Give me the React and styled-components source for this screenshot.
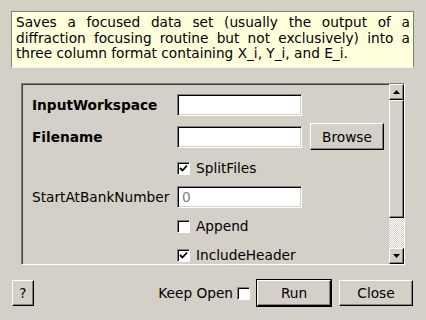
import React from 'react';
import styled, { createGlobalStyle, css } from 'styled-components';

const GlobalStyle = createGlobalStyle`
html, body {
  margin: 0;
  padding: 0;
  background: #d4d0c8;
}
body {
  font-family: "DejaVu Sans", "Liberation Sans", sans-serif;
  font-size: 13.7px;
  color: #000;
}
`;

const Window = styled.div`
width: 426px;
height: 320px;
box-sizing: border-box;
padding: 11px 12px 12px 11px;
display: flex;
flex-direction: column;
background: #d4d0c8;
`;

const Description = styled.div`
height: 57px;
box-sizing: border-box;
background: #ffffdc;
border: 1px solid #808080;
border-bottom-color: #f4f4f4;
padding: 3px 3px 0 4px;
line-height: 15.5px;
text-align: justify;
`;

const Panel = styled.div`
margin: 15px 9px 0 10px;
height: 182px;
box-sizing: border-box;
display: flex;
border: 1px solid;
border-color: #808080 #fff #fff #808080;
box-shadow: inset 1px 1px #404040;
overflow: hidden;
`;

const Form = styled.div`
flex: 1;
padding: 10px 0 0 10px;
display: grid;
grid-template-columns: 137px 125px 74px;
grid-template-rows: 22px 27px 22px 22px 22px 22px;
column-gap: 8px;
row-gap: 7px;
align-items: center;
`;

const Label = styled.div`
grid-column: 1;
white-space: nowrap;
font-weight: ${p => (p.$bold ? 'bold' : 'normal')};
`;

const Field = styled.div`
grid-column: 2;
height: 22px;
box-sizing: border-box;
background: #fff;
border: 1px solid;
border-color: #808080 #fff #fff #808080;
box-shadow: inset 1px 1px #000, inset -1px -1px #d4d0c8;
padding: 2px 4px;
color: #808080;
line-height: 16px;
`;

const raised = css`
box-sizing: border-box;
background: #d4d0c8;
border: 1px solid;
border-color: #fff #000 #000 #fff;
box-shadow: inset -1px -1px #808080;
`;

const Button = styled.div`
${raised}
height: ${p => p.$h || 26}px;
width: ${p => p.$w}px;
margin-left: ${p => p.$gap || 0}px;
display: flex;
align-items: center;
justify-content: center;
${p => p.$default && css`
  outline: 1px solid #000;
`}
`;

const CheckRow = styled.label`
grid-column: 2 / span 2;
display: flex;
align-items: center;
gap: 6px;
`;

const Box = styled.span`
width: 13px;
height: 13px;
box-sizing: border-box;
background: #fff;
border: 1px solid;
border-color: #808080 #fff #fff #808080;
box-shadow: inset 1px 1px #000;
display: flex;
align-items: center;
justify-content: center;
flex: none;
`;

const ScrollBar = styled.div`
width: 15px;
display: flex;
flex-direction: column;
flex: none;
`;

const Arrow = styled.div`
${raised}
height: 16px;
display: flex;
align-items: center;
justify-content: center;
`;

const Thumb = styled.div`
${raised}
height: 118px;
`;

const Trough = styled.div`
flex: 1;
background-color: #d4d0c8;
background-image: conic-gradient(#fff 25%, transparent 0 50%, #fff 0 75%, transparent 0);
background-size: 2px 2px;
`;

const BottomRow = styled.div`
margin-top: 15px;
padding: 0 1px;
display: flex;
align-items: center;
`;

const Spacer = styled.div`
flex: 1;
`;

const KeepOpen = styled.label`
display: flex;
align-items: center;
gap: 4px;
margin-right: 7px;
`;

const Check = ({ checked }) => (
  <Box>
    {checked && (
      <svg width="9" height="9" viewBox="0 0 9 9">
        <path d="M1 4 L3.5 6.5 L8 1.5" stroke="#000" strokeWidth="1.8" fill="none" />
      </svg>
    )}
  </Box>
);

const Tri = ({ down }) => (
  <svg width="7" height="4" viewBox="0 0 7 4">
    <path d={down ? 'M0 0 H7 L3.5 4 Z' : 'M0 4 H7 L3.5 0 Z'} fill="#000" />
  </svg>
);

export default function App() {
  return (
    <>
      <GlobalStyle />
      <Window>
        <Description>
          Saves a focused data set (usually the output of a diffraction focusing routine but not exclusively) into a three column format containing X_i, Y_i, and E_i.
        </Description>
        <Panel>
          <Form>
            <Label $bold>InputWorkspace</Label>
            <Field />
            <div />
            <Label $bold>Filename</Label>
            <Field />
            <Button $w={74} $h={27}>Browse</Button>
            <CheckRow><Check checked />SplitFiles</CheckRow>
            <Label>StartAtBankNumber</Label>
            <Field>0</Field>
            <div />
            <CheckRow><Check />Append</CheckRow>
            <CheckRow><Check checked />IncludeHeader</CheckRow>
          </Form>
          <ScrollBar>
            <Arrow><Tri /></Arrow>
            <Thumb />
            <Trough />
            <Arrow><Tri down /></Arrow>
          </ScrollBar>
        </Panel>
        <BottomRow>
          <Button $w={22}>?</Button>
          <Spacer />
          <KeepOpen>Keep Open <Check /></KeepOpen>
          <Button $w={74} $default>Run</Button>
          <Button $w={74} $gap={8}>Close</Button>
        </BottomRow>
      </Window>
    </>
  );
}
